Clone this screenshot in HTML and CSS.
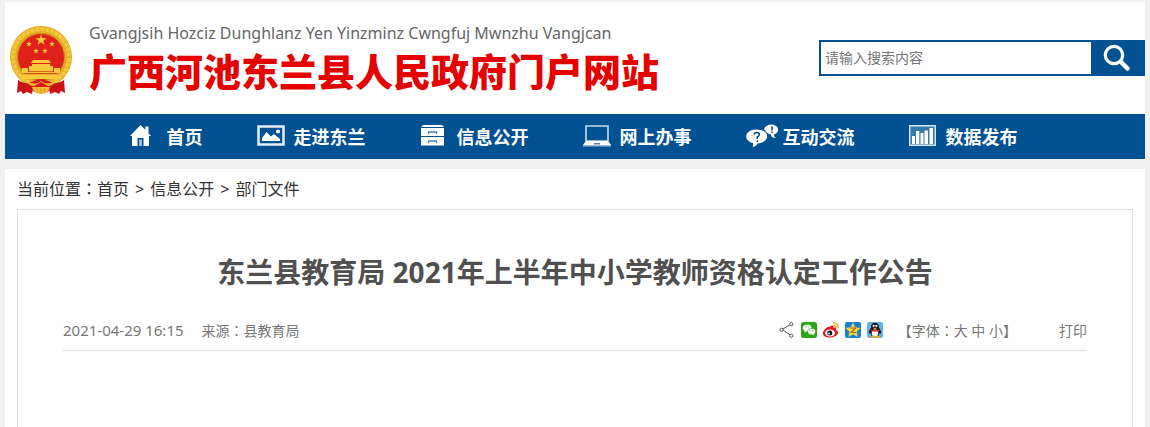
FILE: index.html
```html
<!DOCTYPE html>
<html lang="zh-CN">
<head>
<meta charset="utf-8">
<title>东兰县教育局 2021年上半年中小学教师资格认定工作公告</title>
<link rel="stylesheet" href="styles.css">
</head>
<body>
<svg class="defs" width="0" height="0" aria-hidden="true">
  <symbol id="star" viewBox="-10 -10 20 20"><path d="M0-10 2.3-3.1H9.5L3.7 1.2 5.9 8.1 0 3.8-5.9 8.1-3.7 1.2-9.5-3.1H-2.3Z"/></symbol>
</svg>
<div class="page">
  <header class="header">
    <a class="brand" href="#">
      <svg class="emblem" viewBox="0 0 64 70" role="img" aria-label="国徽">
        <circle cx="32" cy="32" r="31" fill="#e2ab22"/>
        <circle cx="32" cy="32" r="28" fill="none" stroke="#f3c83c" stroke-width="4"/>
        <circle cx="32" cy="32" r="28" fill="none" stroke="#e0a925" stroke-width="3" stroke-dasharray="1 4"/>
        <circle cx="32" cy="32" r="23.500" fill="#e0211b" stroke="#c98f1b"/>
        <g fill="#f8cb3c">
          <use href="#star" x="26" y="9" width="12" height="12"/>
          <use href="#star" x="17" y="16" width="6" height="6"/>
          <use href="#star" x="40" y="16" width="6" height="6"/>
          <use href="#star" x="24" y="23" width="6" height="6"/>
          <use href="#star" x="33" y="23" width="6" height="6"/>
          <path d="M24 35h16l2 3H22zM23 39h18v2h3v5H20v-5h3zM13 43h6v4h26v-4h6v5H13zM11 49h42l-2 5H13z"/>
        </g>
        <path d="M20 46.500h24M12 49h40" stroke="#d4811d" stroke-width=".8"/>
        <path d="M9 55c4 3 10 4 16 3l-2 11-5-2-4 2-2-3-4 2zM55 55c-4 3-10 4-16 3l2 11 5-2 4 2 2-3 4 2z" fill="#c81418"/>
        <path d="M20 58q12-7 24 0l-4 8q-8 5-16 0z" fill="#d7191b"/>
        <path d="M17 56q9 5 15 0 6 5 15 0-5 7-10 4l-5-3-5 3q-5 3-10-4zM23 62h18q-2 7-9 7t-9-7z" fill="#efbd32"/>
        <path d="M32 63v5M28 63l1 4M36 63l-1 4" stroke="#c98f1b" stroke-width=".8"/>
      </svg>
      <span class="brand-text">
        <span class="brand-sub" lang="za">Gvangjsih Hozciz Dunghlanz Yen Yinzminz Cwngfuj Mwnzhu Vangjcan</span>
        <span class="brand-name">广西河池东兰县人民政府门户网站</span>
      </span>
    </a>
    <form class="search">
      <input class="search-input" type="text" placeholder="请输入搜索内容" aria-label="搜索内容">
      <button class="search-button" type="button" aria-label="搜索">
        <svg width="28" height="28" viewBox="0 0 28 28" fill="none" stroke="#fff"><circle cx="11" cy="11" r="8.700" stroke-width="3.200"/><path d="M18 18l6.500 6.500" stroke-width="4.500" stroke-linecap="round"/></svg>
      </button>
    </form>
  </header>

  <nav class="nav" aria-label="主导航">
    <a class="nav-item" href="#"><span class="nav-icon"><svg width="21" height="21" viewBox="0 0 21 21" fill="#fff"><path d="M10.500 0 0 11h2v10h5.500v-8h6v8H19V11h2l-2.500-2.800V1.500h-3.200v3.300z"/><path d="M9 14.500h3V21H9z" fill="#9dbbd6"/></svg></span>首页</a>
    <a class="nav-item" href="#"><span class="nav-icon"><svg width="28" height="21" viewBox="0 0 28 21"><path d="M1.500 1.500h25v18h-25z" fill="none" stroke="#e6eef6" stroke-width="2.500"/><path d="M5 16v-3l4.500-6 4.500 4.500 3-2.500 6 5v2z" fill="#fff"/><circle cx="21" cy="6.500" r="2" fill="#fff"/></svg></span>走进东兰</a>
    <a class="nav-item" href="#"><span class="nav-icon"><svg width="25" height="21" viewBox="0 0 25 21"><path d="M3 0h19l2 2H1z" fill="#fff"/><path d="M1 3h23v8H1zM1 12h23v8.500H1z" fill="#fff"/><path d="M8.500 9V7h8v2M8.500 18v-2h8v2" fill="none" stroke="#4c81af" stroke-width="1.300"/></svg></span>信息公开</a>
    <a class="nav-item" href="#"><span class="nav-icon"><svg width="28" height="22" viewBox="0 0 28 22"><path d="M3 1h22v15H3z" fill="none" stroke="#c9dae9" stroke-width="1.600"/><path d="M3 16h22l3 4H0z" fill="#fff"/><path d="M0 20h28v1.500H0z" fill="#9dbbd6"/><path d="M11 18h6v1.500h-6z" fill="#4c81af"/></svg></span>网上办事</a>
    <a class="nav-item" href="#"><span class="nav-icon"><svg width="33" height="23" viewBox="0 0 33 23"><path d="M18 5c2-6 13-6 14 0 .5 3-1.500 4.500-4 5.500q-.5 2.500 2 3.500-5 0-5-3.500-4-.5-7-5.500z" fill="#fff"/><path d="M10.500 5.500c14 0 14 13 1 14q-1 2.500-5 3.500 1-1.500.5-4c-10-2-9-13.500 3.500-13.500z" fill="#fff"/><path d="M8.300 10.500q0-2 2.500-2 2.500 0 2.500 2 0 1.500-2 2.500v2M11.300 16.300v1.700M26 2.500v4M26 7.500v1.500" fill="none" stroke="#02407a" stroke-width="1.500"/></svg></span>互动交流</a>
    <a class="nav-item" href="#"><span class="nav-icon"><svg width="27" height="21" viewBox="0 0 27 21"><path d="M.7.700h25.600v19.600H.7z" fill="#337aae" stroke="#d9e6f1" stroke-width="1.400"/><path d="M3 11h3v8H3zM7 6h3.300v13H7zM11.500 8h3v11h-3zM15.500 5.500h3.500V19h-3.500zM20.500 3H24v16h-3.500z" fill="#fff"/></svg></span>数据发布</a>
  </nav>

  <main class="main">
    <nav class="crumbs" aria-label="当前位置">当前位置<span class="colon" lang="zh-TW">：</span><a href="#">首页</a><span class="crumb-sep">&gt;</span><a href="#">信息公开</a><span class="crumb-sep">&gt;</span><a href="#">部门文件</a></nav>
    <article class="article">
      <h1 class="title">东兰县教育局 2021年上半年中小学教师资格认定工作公告</h1>
      <div class="meta">
        <time datetime="2021-04-29T16:15">2021-04-29 16:15</time>
        <span>来源<span class="colon" lang="zh-TW">：</span>县教育局</span>
        <div class="share">
          <a href="#" aria-label="分享"><svg width="16" height="16" viewBox="0 0 16 16" fill="none" stroke="#555"><path d="M11.500 2.500 3 7.500l8.500 5.500"/><g fill="#fff"><circle cx="12.300" cy="2.200" r="1.600"/><circle cx="2.500" cy="7.800" r="1.600"/><circle cx="12.300" cy="13.700" r="1.600"/></g></svg></a>
          <a href="#" aria-label="微信"><svg width="16" height="16" viewBox="0 0 16 16"><rect width="16" height="16" rx="2.500" fill="#2aa515"/><path d="M6.300 2.500c5.500 0 6 7 0 7h-1l-2 1 .4-1.700C.2 6.800 2 2.500 6.300 2.500z" fill="#fff"/><path d="M10.200 6.300c5 0 5.500 4.500 2.800 6l.3 1.500-1.800-1c-6.500.8-6.200-6.500-1.300-6.500z" fill="#fff" stroke="#2aa515" stroke-width=".6"/><path d="M4.500 4.500h1v1h-1zM7.500 4.500h1v1h-1zM8.500 8.300h1v1h-1zM11.300 8.300h1v1h-1z" fill="#2aa515"/></svg></a>
          <a href="#" aria-label="微博"><svg width="16" height="16" viewBox="0 0 16 16"><path d="M7 4.500c2-1.800 4-1 3.300 1.200 2-.6 3.500 0 2.700 2C19 12 10.500 16 6 15.500-.5 15-1.500 11 1.500 7.800 4 5 6.500 3.500 7 5.500z" fill="#df1b25"/><ellipse cx="7" cy="11" rx="5" ry="3.500" fill="#fff"/><circle cx="6.800" cy="11" r="2.500" fill="#111"/><circle cx="6" cy="11.500" r=".9" fill="#fff"/><path d="M10 1c3.500-.5 5.500 2 5 5.500M10.500 3.500c1.800-.2 2.700 1 2.300 2.800" fill="none" stroke="#f0a020" stroke-width="1.300"/></svg></a>
          <a href="#" aria-label="QQ空间"><svg width="16" height="16" viewBox="0 0 16 16"><rect width="16" height="16" rx="2" fill="#1782d8"/><path d="M8 .5l2.200 4.800 5.300.6-3.900 3.600 1 5.500L8 12.300 3.400 15l1-5.500L.5 5.900l5.300-.6z" fill="#ffd23b"/><path d="M5.500 6h5l-4.500 4.500h5" fill="none" stroke="#a96b12" stroke-width="1.200"/></svg></a>
          <a href="#" aria-label="QQ"><svg width="16" height="16" viewBox="0 0 16 16"><rect width="16" height="16" rx="2" fill="#5db5ec"/><path d="M8 .8c3 0 4.200 2 4 5 1.500 2 2.500 4 2 6l-1.500-.8L11.500 14h-7L3.500 11 2 11.800c-.5-2 .5-4 2-6C3.800 2.800 5 .8 8 .8z" fill="#151515"/><ellipse cx="8" cy="11" rx="3.300" ry="3.500" fill="#fff"/><circle cx="6.600" cy="3.800" r="1.100" fill="#fff"/><circle cx="9.400" cy="3.800" r="1.100" fill="#fff"/><path d="M5.500 5.700h5L8 7.300zM3.500 13.700h4v2h-4zM8.500 13.700h4v2h-4z" fill="#f2a41c"/><path d="M3.800 7.200q4.200 2 8.400 0v1.600q-4.200 1.800-8.400 0z" fill="#e3201f"/></svg></a>
        </div>
        <div class="font-size">【字体<span class="colon" lang="zh-TW">：</span><button type="button">大</button> <button type="button">中</button> <button type="button">小</button>】</div>
        <button type="button">打印</button>
      </div>
    </article>
  </main>
</div>
</body>
</html>
```
FILE: styles.css
```css
* {
  box-sizing: border-box;
}

body {
  margin: 0;
  background: #f1f1f1;
  color: #333;
  font-family: "Noto Sans", "Noto Sans CJK SC", sans-serif;
}

a {
  color: inherit;
  text-decoration: none;
}

button {
  padding: 0;
  border: 0;
  background: none;
  color: inherit;
  font: inherit;
  cursor: pointer;
}

svg {
  display: block;
}

.defs {
  position: absolute;
}

.colon {
  font-family: "Noto Sans CJK TC", sans-serif;
  line-height: 1;
}

.page {
  display: flex;
  flex-direction: column;
  min-height: 100vh;
  padding: 2px 5px 0;
}

.header {
  display: flex;
  justify-content: space-between;
  align-items: center;
  height: 112px;
  padding-left: 4px;
  background: #fff;
}

.brand {
  display: flex;
  align-items: center;
  gap: 16px;
  padding-top: 4px;
}

.emblem {
  width: 64px;
  height: 70px;
}

.brand-text {
  display: flex;
  flex-direction: column;
}

.brand-sub {
  color: #666;
  font-size: 16px;
  line-height: 20px;
}

.brand-name {
  color: #e60000;
  font-family: "Noto Sans CJK SC", sans-serif;
  font-size: 38px;
  font-weight: 900;
  line-height: 54px;
}

.search {
  display: flex;
  width: 326px;
  height: 36px;
  border: 2px solid #025192;
  background: #025192;
}

.search-input {
  flex: 1;
  min-width: 0;
  padding: 0 4px 2px;
  border: 0;
  background: #fff;
  font: inherit;
  font-size: 14px;
}

.search-input::placeholder {
  color: #757575;
}

.search-button {
  display: grid;
  place-items: center;
  width: 52px;
}

.nav {
  display: flex;
  justify-content: center;
  align-items: center;
  gap: 54px;
  height: 45px;
  padding: 0 3px 2px 0;
  background: #025192;
  color: #fff;
  font-size: 18px;
  font-weight: 700;
  white-space: nowrap;
}

.nav-item {
  display: flex;
  align-items: center;
}

.nav-icon {
  display: flex;
  width: 37px;
}

.main {
  display: flex;
  flex: 1;
  flex-direction: column;
  margin-top: 10px;
  padding: 0 12px;
  background: #fff;
}

.crumbs {
  height: 40px;
  font-size: 16px;
  line-height: 40px;
}

.crumb-sep {
  margin: 0 6px;
}

.article {
  flex: 1;
  padding: 35px 45px 0;
  border: 1px solid #ddd;
  border-bottom: 0;
}

.title {
  margin: 0;
  color: #505050;
  font-size: 28px;
  line-height: 54px;
  text-align: center;
}

.meta {
  display: flex;
  align-items: center;
  height: 52px;
  padding-top: 10px;
  border-bottom: 1px solid #ddd;
  color: #777;
  font-size: 14px;
}

.meta time {
  margin-right: 18px;
  font-size: 15px;
}

.share {
  display: flex;
  gap: 6px;
  margin-left: auto;
}

.font-size {
  margin: 0 42px 0 15px;
}
```
